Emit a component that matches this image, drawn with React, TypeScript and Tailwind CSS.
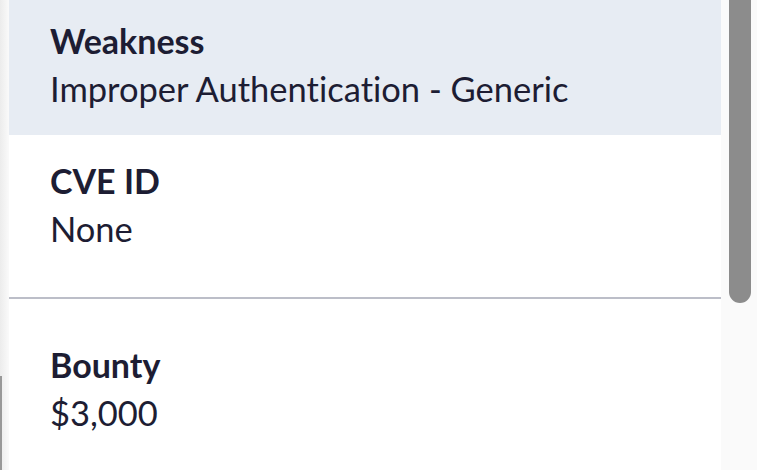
const font = { fontFamily: 'Lato, "Noto Sans", sans-serif' };

interface FieldProps {
  label: string;
  value: string;
}

function Field({ label, value }: FieldProps) {
  return (
    <div className="[font-variant-ligatures:none] text-[#1d1d33]">
      <div className="text-[34px] leading-[48px] font-bold">{label}</div>
      <div className="text-[34.5px] leading-[48px]">{value}</div>
    </div>
  );
}

export default function App() {
  return (
    <div className="flex h-[470px] w-[757px] overflow-hidden bg-white" style={font}>
      <div className="relative w-[9px] bg-gradient-to-r from-[#ececec] to-[#fafafa]">
        <div className="absolute left-0 top-[376px] h-[94px] w-[2px] bg-[#999999]" />
      </div>

      <div className="flex w-[712px] flex-col">
        <div className="bg-[#e7ecf3] pl-[41px] pt-[17px] pb-[22px]">
          <Field label="Weakness" value="Improper Authentication - Generic" />
        </div>
        <div className="pl-[41px] pt-[22px] pb-[44px]">
          <Field label="CVE ID" value="None" />
        </div>
        <div className="h-[2px] bg-[#bcbec8]" />
        <div className="pl-[41px] pt-[42px]">
          <Field label="Bounty" value="$3,000" />
        </div>
      </div>

      <div className="w-[36px] bg-[#fafafa] pl-[8px]">
        <div className="h-[303px] w-[22px] rounded-b-full bg-[#8c8c8c]" />
      </div>
    </div>
  );
}
